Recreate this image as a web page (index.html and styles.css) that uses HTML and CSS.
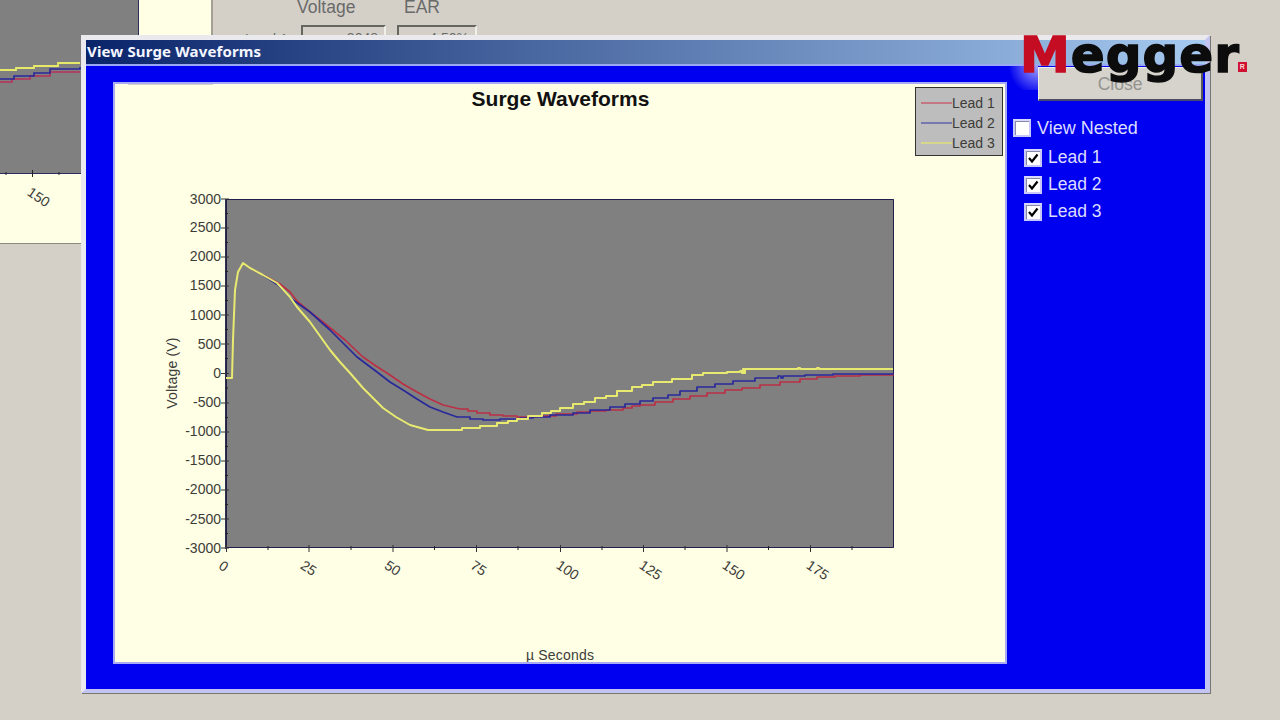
FILE: index.html
```html
<!DOCTYPE html>
<html lang="en">
<head>
<meta charset="utf-8">
<title>View Surge Waveforms</title>
<link rel="stylesheet" href="styles.css">
</head>
<body>
<div class="desktop">
  <section class="back-window">
    <svg class="back-chart" viewBox="0 0 211 243" width="211" height="243">
      <rect x="0" y="0" width="211" height="243" fill="#ffffe6"/>
      <rect x="0" y="0" width="138" height="173" fill="#808080"/>
      <path d="M0 173.500H138.500V0" fill="none" stroke="#2b2b5e" stroke-width="1"/>
      <path d="M6 172V175M32.500 170V177M59 172V175" stroke="#222" stroke-width="1"/>
      <path d="M0 82H12V79H30V76H50V72H80" fill="none" stroke="#b8305a" stroke-width="1.600"/>
      <path d="M0 79H14V76H34V73H50V69H80V67" fill="none" stroke="#28289a" stroke-width="1.600"/>
      <path d="M0 70H16V68H34V66H58V63H80" fill="none" stroke="#e6e86a" stroke-width="1.800"/>
      <text class="tick" transform="translate(38 198) rotate(34)" text-anchor="middle" dominant-baseline="middle">150</text>
    </svg>
    <div class="back-form">
      <div class="back-headers"><span class="back-volt">Voltage</span><span class="back-ear">EAR</span></div>
      <div class="back-row">
        <span class="back-label">Lead 1</span>
        <span class="back-input back-input-a">3048</span>
        <span class="back-input">4.50%</span>
      </div>
    </div>
  </section>

  <section class="surge">
    <header class="titlebar">View Surge Waveforms</header>
    <div class="surge-body">
      <div class="panel">
        <svg class="chart" viewBox="115 84 890 578" width="890" height="578">
          <path d="M128 84.500H213" stroke="#d4d4cc" stroke-width="1"/>
          <text class="chart-title" x="560.500" y="100" text-anchor="middle" dominant-baseline="middle">Surge Waveforms</text>

          <rect x="226" y="199" width="668" height="349" fill="#808080"/>
          <path d="M226 199.500H893.500V547.500H226Z" fill="none" stroke="#20204e" stroke-width="1"/>
          <path d="M226 199V549" stroke="#10103a" stroke-width="1.500"/>
          <path d="M221 199H229M221 228H229M221 257H229M221 286H229M221 315H229M221 344H229M221 373.500H229M221 403H229M221 432H229M221 461H229M221 490H229M221 519H229M221 548H229" stroke="#333" stroke-width="1"/>
          <path d="M225 213.500H228M225 242.500H228M225 271.500H228M225 300.500H228M225 329.500H228M225 358.500H228M225 388H228M225 417.500H228M225 446.500H228M225 475.500H228M225 504.500H228M225 533.500H228" stroke="#222" stroke-width="1"/>
          <path d="M226.500 545V552M309 545V552M393 545V552M476.500 545V552M560.500 545V552M643.500 545V552M727 545V552M810.500 545V552" stroke="#333" stroke-width="1"/>
          <path d="M268 546V550M351 546V550M434.500 546V550M518 546V550M602 546V550M685 546V550M768.500 546V550M852 546V550" stroke="#222" stroke-width="1"/>

          <g class="tick">
            <text x="221" y="200" text-anchor="end" dominant-baseline="middle">3000</text>
            <text x="221" y="228" text-anchor="end" dominant-baseline="middle">2500</text>
            <text x="221" y="257" text-anchor="end" dominant-baseline="middle">2000</text>
            <text x="221" y="286" text-anchor="end" dominant-baseline="middle">1500</text>
            <text x="221" y="316" text-anchor="end" dominant-baseline="middle">1000</text>
            <text x="221" y="345" text-anchor="end" dominant-baseline="middle">500</text>
            <text x="221" y="374" text-anchor="end" dominant-baseline="middle">0</text>
            <text x="221" y="403" text-anchor="end" dominant-baseline="middle">-500</text>
            <text x="221" y="432" text-anchor="end" dominant-baseline="middle">-1000</text>
            <text x="221" y="461" text-anchor="end" dominant-baseline="middle">-1500</text>
            <text x="221" y="490" text-anchor="end" dominant-baseline="middle">-2000</text>
            <text x="221" y="520" text-anchor="end" dominant-baseline="middle">-2500</text>
            <text x="221" y="549" text-anchor="end" dominant-baseline="middle">-3000</text>
            <g text-anchor="middle" dominant-baseline="middle">
              <text transform="translate(223 567) rotate(34)">0</text>
              <text transform="translate(308 569) rotate(34)">25</text>
              <text transform="translate(392 569) rotate(34)">50</text>
              <text transform="translate(478 569) rotate(34)">75</text>
              <text transform="translate(567 571) rotate(34)">100</text>
              <text transform="translate(650 571) rotate(34)">125</text>
              <text transform="translate(733 571) rotate(34)">150</text>
              <text transform="translate(817 571) rotate(34)">175</text>
            </g>
            <text class="tick-wide" transform="translate(173.500 373) rotate(-90)" text-anchor="middle" dominant-baseline="middle">Voltage (V)</text>
            <text class="tick-wide" x="560" y="656" text-anchor="middle" dominant-baseline="middle">µ Seconds</text>
          </g>

          <g fill="none" stroke-linejoin="round">
            <path class="trace" stroke="#bb2f45" d="M250 268L267 277L280 284L290 292L297 301L310 312L323 322L345 340L363 357L376 366L390 375L403 384L417 392L430 399L443 405L460 409H468V411H477V413H490V415H503V416H517V417H535V416H556V414H577V412H590V411H606V410H623V408H632V406H640V405H655V402H673V399H690V396H707V393H725V390H742V388H760V385H780V382H800V379H817V377H835V376H860V375H893V374"/>
            <path class="trace" stroke="#28289a" d="M250 268L263 275L278 285L293 300L310 312L330 330L343 343L357 357L377 372L390 382L403 390L417 399L430 407L443 412L457 417H470V419H483V420H500V419H520V418H533V417H550V415H573V413H590V410H610V407H625V404H640V401H653V398H668V395H680V391H697V387H715V384H733V381H755V378H778V376H781V378H783V376H805V375H833V374H893V373"/>
            <path class="trace-y" stroke="#e8ea70" d="M226 378H232L233 340L235 290L238 272L243 263L250 268L263 275L277 283L290 297L297 307L310 322L320 336L330 350L340 362L350 373L363 388L373 398L383 408L396 417L410 425L428 430H442H462V428H480V426H497V423H508V421H517V419H528V416H542V413H551V411H560V408H573V404H584V402H595V398H606V396H617V391H632V387H642V385H653V382H672V379H692V375H703V373H727V372H740V371H742V373H743V369H744V373H745V369H798V368H800V369H817V368H819V369H893"/>
          </g>

          <rect class="legend-box" x="915.500" y="87.500" width="87" height="68"/>
          <path d="M921 103H952" stroke="#c8485c" stroke-width="1.200"/>
          <path d="M921 123H952" stroke="#4a4aa8" stroke-width="1.200"/>
          <path d="M921 143H952" stroke="#e6e86a" stroke-width="1.200"/>
          <g class="tick">
            <text x="952" y="104" dominant-baseline="middle">Lead 1</text>
            <text x="952" y="124" dominant-baseline="middle">Lead 2</text>
            <text x="952" y="144" dominant-baseline="middle">Lead 3</text>
          </g>
        </svg>
      </div>
      <aside class="side">
        <button class="close-btn" type="button">Close</button>
        <div class="check check-nested"><span class="box"></span><span class="check-text-nested">View Nested</span></div>
        <div class="leads">
          <div class="check"><span class="box"><svg viewBox="0 0 12 12" width="12" height="12"><path d="M2 6L5 9.500L10.500 2.500" fill="none" stroke="#000" stroke-width="2.200"/></svg></span><span>Lead 1</span></div>
          <div class="check"><span class="box"><svg viewBox="0 0 12 12" width="12" height="12"><path d="M2 6L5 9.500L10.500 2.500" fill="none" stroke="#000" stroke-width="2.200"/></svg></span><span>Lead 2</span></div>
          <div class="check"><span class="box"><svg viewBox="0 0 12 12" width="12" height="12"><path d="M2 6L5 9.500L10.500 2.500" fill="none" stroke="#000" stroke-width="2.200"/></svg></span><span>Lead 3</span></div>
        </div>
      </aside>
    </div>
  </section>

  <div class="logo"><span class="logo-m">M</span>egger<span class="logo-r">R</span></div>
</div>
</body>
</html>
```

FILE: styles.css
```css
html, body {
  margin: 0;
  padding: 0;
}

body {
  font-family: "Liberation Sans", Arial, sans-serif;
}

.desktop {
  position: relative;
  width: 1280px;
  height: 720px;
  overflow: hidden;
  background: #d4d0c8;
}

.back-window {
  position: absolute;
  left: 0;
  top: 0;
  display: flex;
}

.back-chart {
  display: block;
  box-shadow: 0 1px 0 #8a8a80;
}

.back-form {
  border-left: 2px solid #a4a098;
  height: 36px;
  width: 300px;
  overflow: hidden;
  color: #6a6a6a;
}

.back-headers {
  display: flex;
  font-size: 17.500px;
  line-height: 14px;
  padding-left: 84px;
}

.back-volt {
  width: 107px;
}

.back-row {
  display: flex;
  margin-top: 11px;
  font-size: 14px;
}

.back-label {
  width: 88px;
  padding-left: 32px;
  box-sizing: border-box;
  padding-top: 6px;
}

.back-input {
  width: 80px;
  height: 40px;
  box-sizing: border-box;
  border: 2px solid #66665f;
  border-right-color: #f0f0ea;
  border-bottom-color: #f0f0ea;
  text-align: right;
  padding: 3px 6px 0 0;
  margin-right: 11px;
}

.back-input-a {
  width: 85px;
}

.surge {
  position: absolute;
  left: 81px;
  top: 35px;
  width: 1129px;
  height: 658px;
  box-sizing: border-box;
  display: flex;
  flex-direction: column;
  border-style: solid;
  border-width: 5px 5px 4px 5px;
  border-color: #e9e9ee #c4c4f2 #c4c4f2 #e9e9ee;
  box-shadow: 1px 1px 0 #77776f;
  background: #0000f0;
}

.surge::after {
  content: "";
  position: absolute;
  left: 921px;
  top: 26px;
  width: 31px;
  height: 24px;
  background: radial-gradient(circle at 100% 0, rgba(205, 205, 255, 0.8), rgba(205, 205, 255, 0) 75%);
}

.titlebar {
  flex: none;
  height: 26px;
  box-sizing: border-box;
  padding: 1px 0 0 1px;
  font-family: "Noto Sans", sans-serif;
  font-weight: 700;
  font-size: 15px;
  letter-spacing: 0.150px;
  line-height: 20px;
  color: #f4f6ff;
  background: linear-gradient(90deg, #0a246a 0%, #a6caf0 100%);
  border-bottom: 2px solid #9aa8f4;
}

.surge-body {
  flex: 1;
  display: flex;
  align-items: flex-start;
  padding: 16px 0 0 27px;
}

.panel {
  flex: none;
  width: 894px;
  height: 582px;
  box-sizing: border-box;
  border: 2px solid #a9aaf4;
  background: #ffffe6;
}

.chart {
  display: block;
}

.chart-title {
  font-family: "Liberation Sans", Arial, sans-serif;
  font-weight: 700;
  font-size: 21px;
  fill: #111;
}

.tick {
  font-family: "Liberation Sans", Arial, sans-serif;
  font-size: 14px;
  fill: #3c3c38;
}

.tick-wide {
  letter-spacing: 0.200px;
}

.trace {
  stroke-width: 1.700;
}

.trace-y {
  stroke-width: 2;
}

.legend-box {
  fill: #bdbdbd;
  stroke: #33332e;
  stroke-width: 1;
}

.side {
  flex: none;
  display: flex;
  flex-direction: column;
  margin-top: -15px;
  color: #dcdcff;
  font-size: 17.500px;
}

.close-btn {
  align-self: flex-start;
  width: 165px;
  height: 34px;
  margin-left: 31px;
  padding: 2px 0 0 0;
  border: 0;
  border-top: 1px solid #f0eee8;
  border-left: 1px solid #f0eee8;
  border-right: 2px solid #5c5a54;
  border-bottom: 2px solid #4a4a6a;
  background: #d6d3cc;
  color: #939390;
  font-family: "Liberation Sans", Arial, sans-serif;
  font-size: 17.500px;
}

.check {
  display: flex;
  align-items: center;
  gap: 6px;
  height: 27px;
}

.check-nested {
  margin: 18px 0 0 6px;
  height: 18px;
}

.check-text-nested {
  font-size: 18px;
}

.leads {
  display: flex;
  flex-direction: column;
  margin: 7px 0 0 17px;
}

.box {
  flex: none;
  width: 14px;
  height: 14px;
  display: flex;
  align-items: center;
  justify-content: center;
  background: #fff;
  border: 2px solid #c8c8f8;
  border-top-color: #d8d8ff;
  box-shadow: inset 1px 1px 0 #8888a8;
}

.logo {
  position: absolute;
  left: 1020px;
  top: 25px;
  display: flex;
  align-items: flex-start;
  font-family: "DejaVu Sans", sans-serif;
  font-weight: 700;
  font-size: 50px;
  line-height: 60px;
  letter-spacing: 1px;
  color: #0c0c0c;
  -webkit-text-stroke: 1.500px #0c0c0c;
}

.logo-m {
  color: #c40c22;
  -webkit-text-stroke: 1.500px #c40c22;
}

.logo-r {
  width: 9px;
  height: 10px;
  margin: 37px 0 0 -2px;
  background: #d01030;
  color: #f8dcdc;
  font-family: "Liberation Sans", sans-serif;
  font-size: 7px;
  line-height: 10px;
  letter-spacing: 0;
  text-align: center;
  -webkit-text-stroke: 0;
}
```
